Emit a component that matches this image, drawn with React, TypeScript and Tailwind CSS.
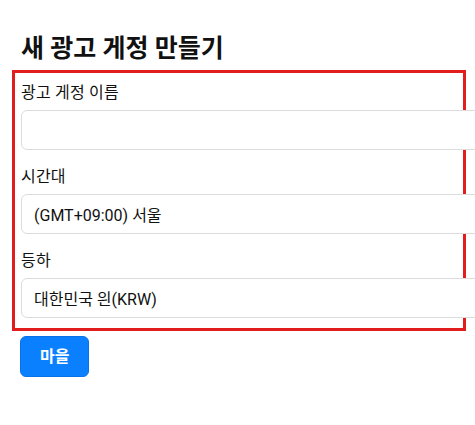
const fields = [
  { label: "광고 게정 이름", value: "" },
  { label: "시간대", value: "(GMT+09:00) 서울" },
  { label: "등하", value: "대한민국 읜(KRW)" },
];

export default function App() {
  return (
    <div
      className="min-h-[425px] bg-white pt-[33px] pl-[12px] text-[#111] overflow-hidden"
      style={{ fontFamily: 'Roboto, "Noto Sans CJK KR", sans-serif' }}
    >
      <h1 className="pl-[9px] mb-[5px] text-[25px] leading-[32px] font-bold">새 광고 게정 만들기</h1>

      <div className="w-[454px] border-[3px] border-[#e11d1d] pt-[8px] pb-[10px] pl-[6px]">
        <div className="flex flex-col gap-[15px]">
          {fields.map((f) => (
            <div key={f.label}>
              <label className="block text-[16px] leading-[24px] tracking-[0.2px]">{f.label}</label>
              <input
                readOnly
                value={f.value}
                className="mt-[5px] block h-[40px] w-[480px] rounded-[6px] border border-[#dcdcdc] bg-white px-[12px] text-[16px] text-[#111] outline-none"
              />
            </div>
          ))}
        </div>
      </div>

      <button className="ml-[8px] mt-[5px] h-[41px] rounded-[6px] border border-[#0a72e8] bg-[#0b80ff] px-[19px] text-[16px] font-bold text-white">
        마을
      </button>
    </div>
  );
}
